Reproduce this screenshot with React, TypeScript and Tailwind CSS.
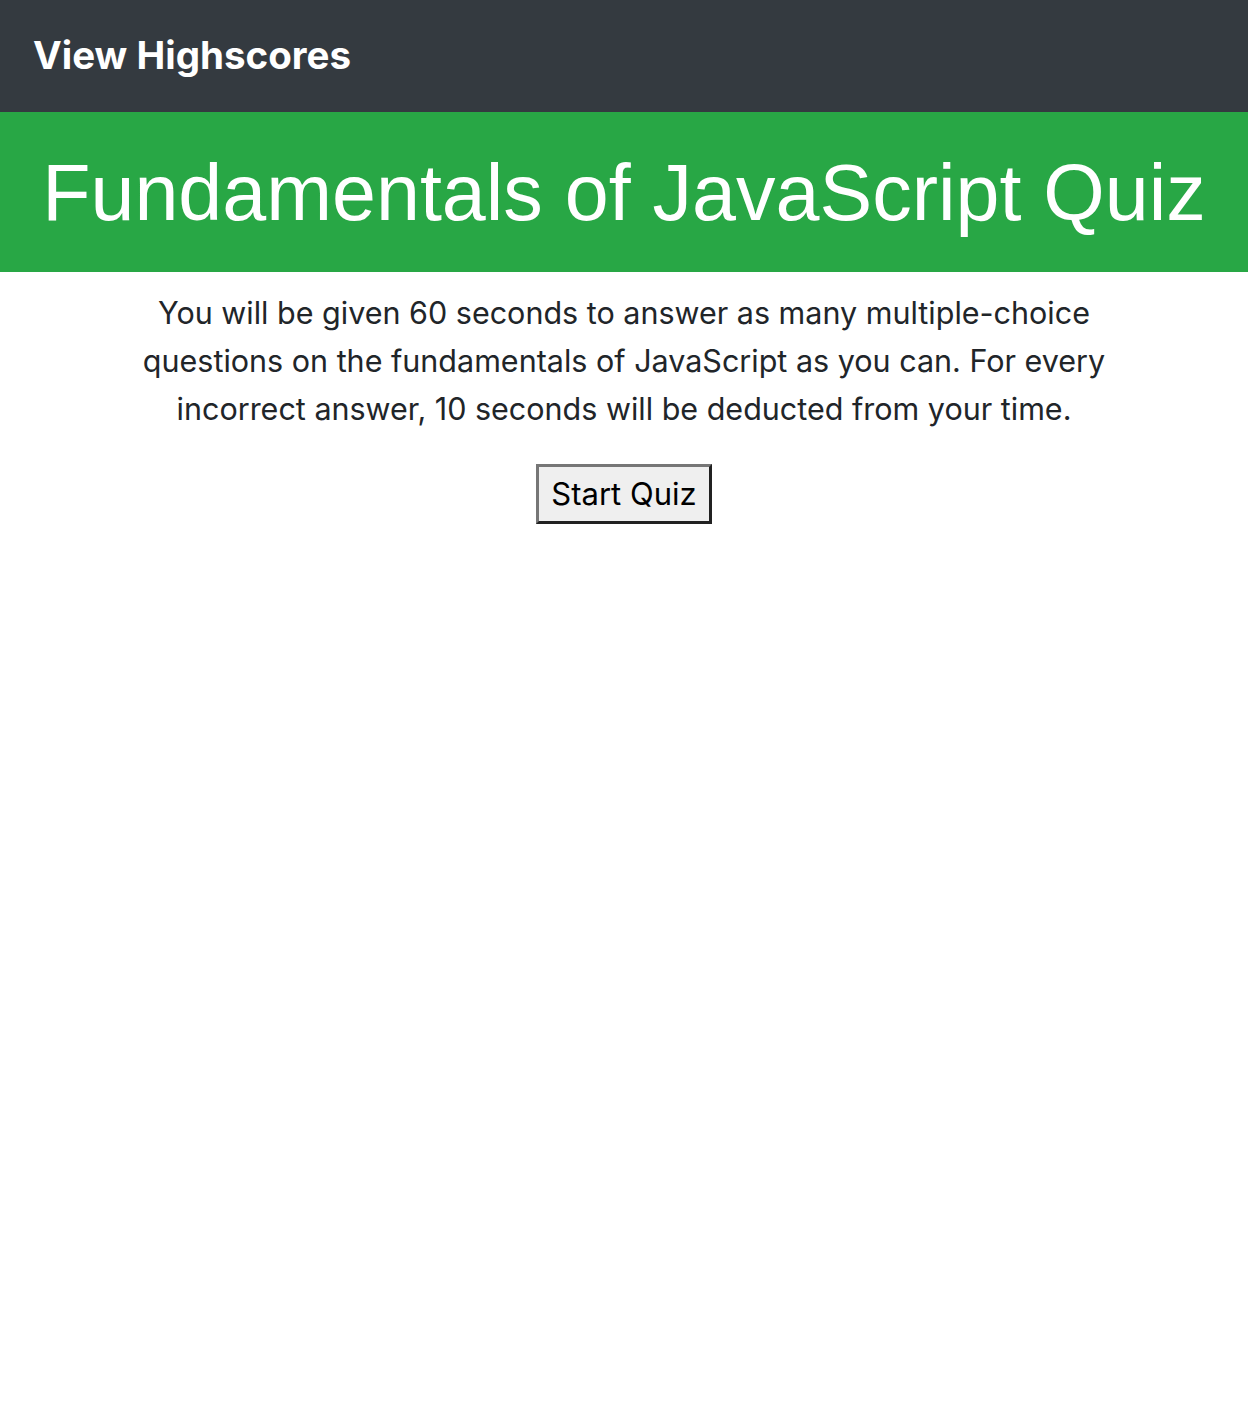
import React from "react";

const App: React.FC = () => {
  return (
    <div className="min-h-[1420px] bg-white font-['Inter',sans-serif] text-[#212529]">
      <nav className="flex h-[112px] items-center bg-[#343a40] px-[33px]">
        <a className="text-[38.5px] font-bold tracking-normal text-white">View Highscores</a>
      </nav>
      <header className="flex h-[160px] items-center justify-center bg-[#28a745]">
        <h1 className="font-['Liberation_Sans',Arial,sans-serif] text-[79px] leading-none text-white">
          Fundamentals of JavaScript Quiz
        </h1>
      </header>
      <main className="flex flex-col items-center pt-[17px]">
        <p className="w-[1000px] text-center text-[30.5px] leading-[48px]">
          You will be given 60 seconds to answer as many multiple-choice questions on the fundamentals of
          JavaScript as you can. For every incorrect answer, 10 seconds will be deducted from your time.
        </p>
        <button className="mt-[31px] h-[60px] w-[176px] border-[3px] border-t-[#767676] border-l-[#767676] border-r-[#212121] border-b-[#212121] bg-[#efefef] text-[31px] text-black">
          Start Quiz
        </button>
      </main>
    </div>
  );
};

export default App;
